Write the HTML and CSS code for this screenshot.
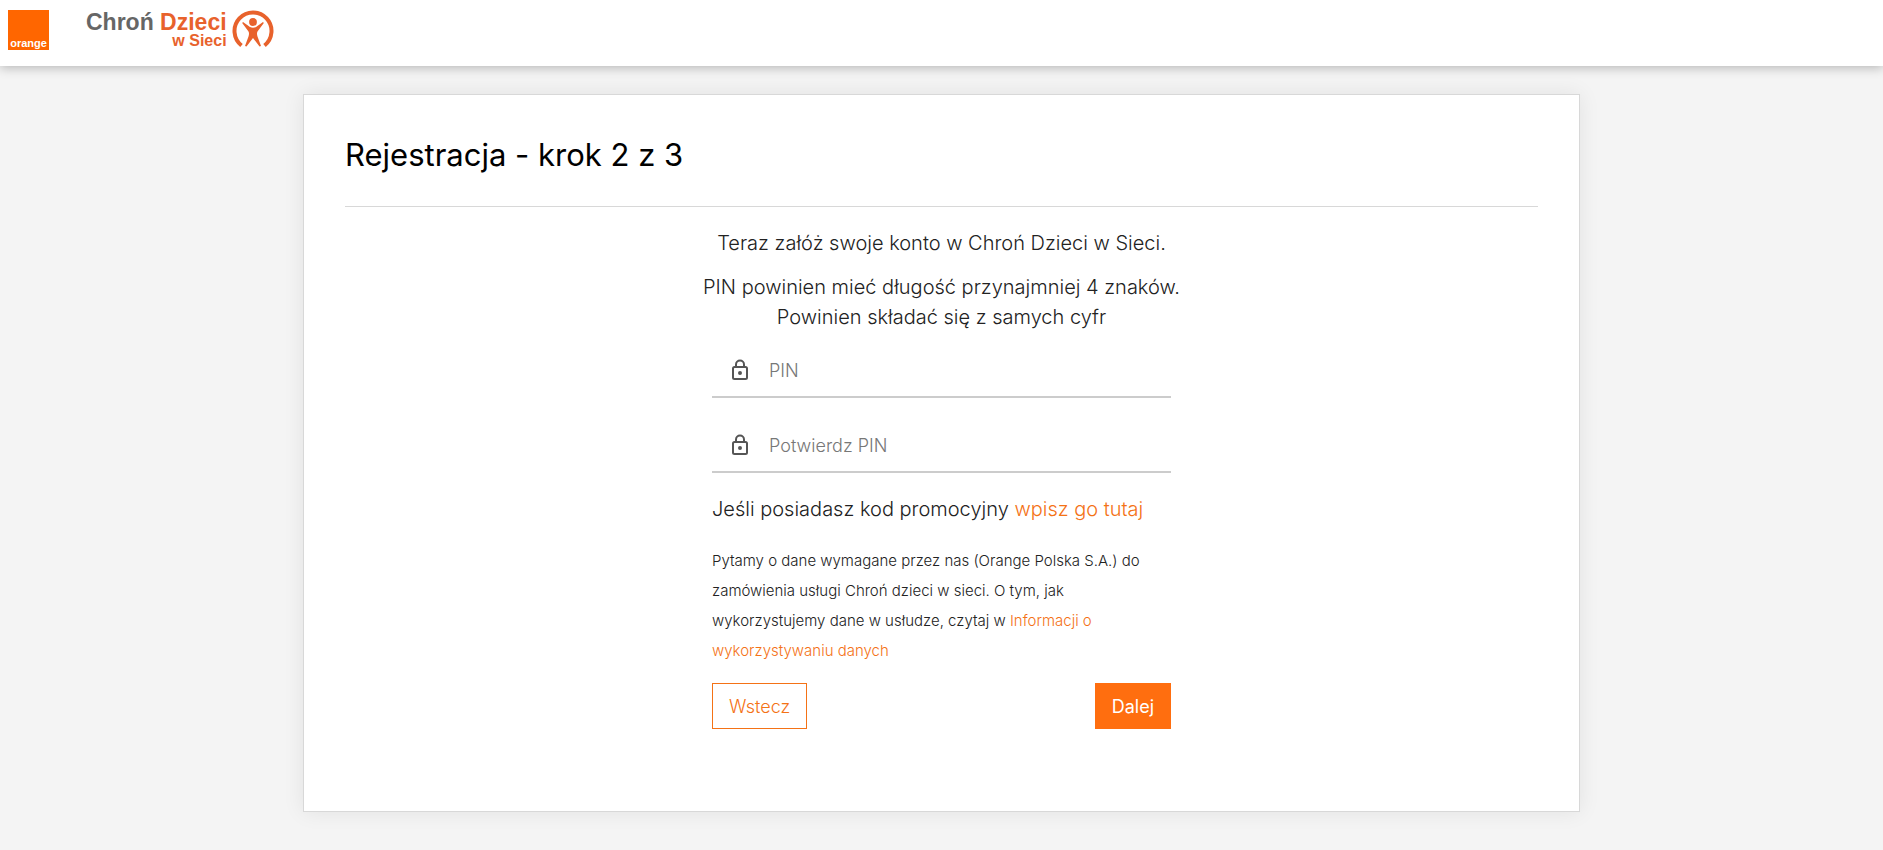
FILE: index.html
```html
<!DOCTYPE html>
<html lang="pl">
<head>
  <meta charset="UTF-8">
  <meta name="viewport" content="width=device-width, initial-scale=1.0">
  <title>Chroń Dzieci w Sieci - Rejestracja</title>
  <link rel="stylesheet" href="styles.css">
</head>

<body>
  <header class="header">
    <a href="#" class="logo-orange">orange</a>
    <a href="#" class="logo-service">
      <span class="logo-text">
        <span class="logo-top"><span class="logo-grey">Chroń</span> Dzieci</span>
        <span class="logo-bottom">w Sieci</span>
      </span>
      <svg class="logo-icon" viewBox="0 0 42 38" aria-hidden="true">
        <path d="M9.500 35.500A18.500 18.500 0 1 1 32.500 35.500" fill="none" stroke="#e8622c" stroke-width="4"/>
        <circle cx="21" cy="12" r="3.900" fill="#e8622c"/>
        <path d="M11 12l7 5q3 1.500 6 0l7-5 .8 1-6.300 8.500q-1 2 0 5L29 36l-1.500.5L21 28l-6.500 8.500L13 36l3.500-9.500q1-3 0-5L10.200 13z" fill="#e8622c"/>
      </svg>
    </a>
  </header>

  <main class="card">
    <h1>Rejestracja - krok 2 z 3</h1>

    <div class="intro">
      <p>Teraz załóż swoje konto w Chroń Dzieci w Sieci.</p>
      <p>PIN powinien mieć długość przynajmniej 4 znaków.<br>Powinien składać się z samych cyfr</p>
    </div>

    <form class="pin-form">
      <div class="field">
        <label for="pin" aria-label="PIN">
          <svg viewBox="0 0 18 22" aria-hidden="true">
            <rect x="2" y="8" width="14" height="12" rx="1.500"/>
            <path d="M5 8V5.500a4 4 0 0 1 8 0V8"/>
            <circle cx="9" cy="14" r="1"/>
          </svg>
        </label>
        <input type="password" id="pin" name="pin" placeholder="PIN">
      </div>
      <div class="field">
        <label for="pin-confirm" aria-label="Potwierdz PIN">
          <svg viewBox="0 0 18 22" aria-hidden="true">
            <rect x="2" y="8" width="14" height="12" rx="1.500"/>
            <path d="M5 8V5.500a4 4 0 0 1 8 0V8"/>
            <circle cx="9" cy="14" r="1"/>
          </svg>
        </label>
        <input type="password" id="pin-confirm" name="pin-confirm" placeholder="Potwierdz PIN">
      </div>

      <p class="promo">Jeśli posiadasz kod promocyjny <a href="#">wpisz go tutaj</a></p>
      <p class="info">Pytamy o dane wymagane przez nas (Orange Polska S.A.) do zamówienia usługi Chroń dzieci w sieci. O tym, jak wykorzystujemy dane w usłudze, czytaj w <a href="#">Informacji o wykorzystywaniu danych</a></p>

      <div class="buttons">
        <button type="button" class="btn">Wstecz</button>
        <button type="submit" class="btn btn-primary">Dalej</button>
      </div>
    </form>
  </main>
</body>
</html>
```

FILE: styles.css
```css
* {
  box-sizing: border-box;
}
body {
  margin: 0;
  background: #f4f4f4;
  color: #222;
  font-family: Inter, "Liberation Sans", sans-serif;
  font-size: 20px;
  font-weight: 300;
  line-height: 30px;
}
h1, p {
  margin: 0;
}
a {
  color: #f47216;
  text-decoration: none;
}

/* Header */
.header {
  display: flex;
  align-items: flex-start;
  gap: 37px;
  height: 66px;
  padding: 10px 8px;
  background: #fff;
  box-shadow: 0 2px 10px rgba(0, 0, 0, 0.25);
}
.logo-orange {
  display: flex;
  align-items: flex-end;
  justify-content: center;
  width: 41px;
  height: 40px;
  background: #ff6600;
  color: #fff;
  font-family: "Liberation Sans", sans-serif;
  font-size: 11px;
  font-weight: bold;
  line-height: 14px;
}
.logo-service {
  display: flex;
  gap: 5px;
  color: #e8622c;
  font-family: "Liberation Sans", sans-serif;
  font-weight: bold;
}
.logo-text {
  display: flex;
  flex-direction: column;
  align-items: flex-end;
}
.logo-top {
  font-size: 23px;
  line-height: 24px;
}
.logo-grey {
  color: #666;
}
.logo-bottom {
  font-size: 16px;
  line-height: 14px;
}
.logo-icon {
  width: 42px;
  height: 38px;
}

/* Card */
.card {
  width: 68%;
  max-width: 1277px;
  margin: 28px auto 37px;
  padding: 40px 41px 82px;
  background: #fff;
  border: 1px solid #d8d8d8;
  box-shadow: 0 0 20px rgba(0, 0, 0, 0.08);
}
h1 {
  padding-bottom: 31px;
  border-bottom: 1px solid #d8d8d8;
  color: #000;
  font-size: 31px;
  font-weight: 400;
  line-height: 40px;
}
.intro {
  display: flex;
  flex-direction: column;
  gap: 14px;
  padding-top: 21px;
  text-align: center;
}

/* Form */
.pin-form {
  max-width: 459px;
  margin: 0 auto;
}
.field {
  display: flex;
  align-items: center;
  height: 55px;
  margin: 11px 0 20px;
  padding-left: 19px;
  border-bottom: 2px solid #ccc;
}
.field + .field {
  margin-bottom: 21px;
}
.field label {
  display: flex;
}
.field svg {
  width: 18px;
  height: 22px;
  fill: none;
  stroke: #555;
  stroke-width: 2;
}
.field input {
  flex: 1;
  min-width: 0;
  padding: 2px 20px 0;
  border: none;
  outline: none;
  background: none;
  color: #222;
  font: inherit;
  font-size: 18px;
}
.field input::placeholder {
  color: #777;
}
.info {
  margin: 22px 0 17px;
  font-size: 15px;
}
.buttons {
  display: flex;
  justify-content: space-between;
}
.btn {
  height: 46px;
  padding: 2px 16px 0;
  border: 1px solid #f47216;
  background: #fff;
  color: #f47216;
  font: inherit;
  font-size: 18px;
  cursor: pointer;
}
.btn-primary {
  border-color: #ff6e0f;
  background: #ff6e0f;
  color: #fff;
  font-weight: 400;
}
```
